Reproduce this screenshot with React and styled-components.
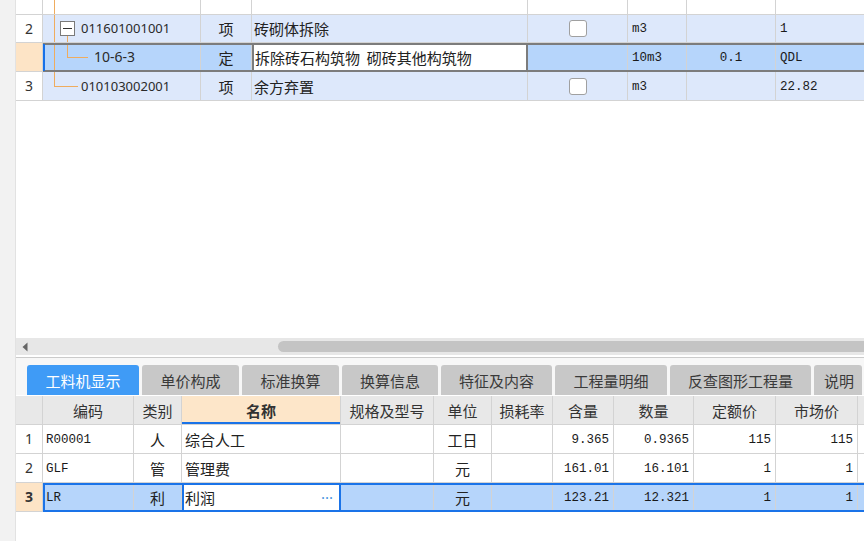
import React from 'react';
import styled, { createGlobalStyle, css } from 'styled-components';

const GlobalStyle = createGlobalStyle`
  html, body { margin: 0; padding: 0; background: #fff; }
  body { font-family: "Noto Sans CJK SC", "Noto Sans", sans-serif; color: #222; }
`;

const Page = styled.div`
  display: flex;
  width: 864px;
  height: 541px;
  overflow: hidden;
`;

const SideStrip = styled.div`
  width: 15px;
  flex-shrink: 0;
  background: #f2f2f2;
  border-right: 1px solid #e2e2e2;
`;

const Main = styled.div`
  flex: 1;
  min-width: 0;
  display: flex;
  flex-direction: column;
  overflow: hidden;
  background: #fff;
`;

const Grid = styled.div`
  display: flex;
  flex-direction: column;
  width: max-content;
`;

const Row = styled.div`
  display: flex;
  height: ${p => p.$h || 29}px;
  background: ${p => p.$bg || '#fff'};
`;

const Cell = styled.div`
  box-sizing: border-box;
  width: ${p => p.$w}px;
  flex-shrink: 0;
  height: 100%;
  display: flex;
  align-items: center;
  justify-content: ${p =>
    p.$align === 'right' ? 'flex-end' : p.$align === 'center' ? 'center' : 'flex-start'};
  padding: 0 ${p => (p.$pad != null ? p.$pad : 4)}px;
  border-right: 1px solid #d3d3d3;
  border-bottom: 1px solid #d3d3d3;
  background: ${p => p.$bg || 'transparent'};
  font-size: 15px;
  line-height: 1;
  white-space: pre;
  overflow: hidden;
  ${p => p.$mono && css`
    font-family: "Liberation Mono", "DejaVu Sans Mono", monospace;
    font-size: 12.5px;
    color: #1a1a1a;
    padding-top: 2px;
  `}
  ${p => p.$num && css`
    font-family: "Noto Sans", sans-serif;
    font-size: 14px;
    color: #333;
  `}
  ${p => p.$bold && css`font-weight: bold;`}
  ${p => p.$edit && css`
    background: #fff;
    outline: 2px solid ${p.$edit};
    outline-offset: -2px;
    justify-content: space-between;
  `}
`;

const HeadCell = styled(Cell)`
  background: ${p => (p.$active ? '#fde6c9' : '#e8e8e8')};
  color: #333;
  justify-content: center;
  font-weight: ${p => (p.$active ? 'bold' : 'normal')};
  ${p => p.$active && css`box-shadow: inset 0 -2px 0 #1a73e8;`}
`;

const TreeCell = styled(Cell)`
  padding: 0;
  align-items: stretch;
`;

const CodeText = styled.span`
  align-self: center;
  font-family: "Noto Sans", sans-serif;
  font-size: ${p => p.$size || 13}px;
  color: #2a2a2a;
`;

const Selection = styled.div`
  display: flex;
  height: 100%;
  position: relative;
  background: #b6d5fb;
  outline: 2px solid ${p => p.$color};
  outline-offset: -2px;
`;

const Marker = styled.span`
  position: absolute;
  left: 0;
  top: 1px;
  bottom: 1px;
  width: 2px;
  background: #1670e8;
  z-index: 1;
`;

const TreeSvg = styled.svg`
  flex-shrink: 0;
  display: block;
`;

const CheckBox = styled.span`
  width: 16px;
  height: 15px;
  border: 1px solid #a0a0a0;
  border-radius: 3px;
  background: #fff;
`;

const EditDots = styled.span`
  color: #4a94e0;
  font-family: "Noto Sans", sans-serif;
  font-size: 15px;
  padding-right: 4px;
`;

const Spacer = styled.div`
  flex: 1;
`;

const ScrollTrack = styled.div`
  height: 17px;
  flex-shrink: 0;
  display: flex;
  align-items: center;
  background: #e7e7e7;
`;

const ArrowBox = styled.div`
  width: 17px;
  height: 100%;
  display: flex;
  align-items: center;
  justify-content: center;
  flex-shrink: 0;
`;

const Thumb = styled.div`
  margin-left: 245px;
  width: 700px;
  height: 11px;
  border-radius: 6px;
  background: #c4c4c4;
  flex-shrink: 0;
`;

const TabBar = styled.div`
  display: flex;
  gap: 3px;
  box-sizing: border-box;
  height: 38px;
  margin-top: 2px;
  margin-bottom: 1px;
  padding: 7px 0 0 11px;
  border-top: 1px solid #cbcbcb;
  background: #f7f7f7;
  flex-shrink: 0;
`;

const Tab = styled.div`
  box-sizing: border-box;
  width: ${p => p.$w}px;
  flex-shrink: 0;
  height: 30px;
  display: flex;
  align-items: center;
  justify-content: ${p => (p.$start ? 'flex-start' : 'center')};
  padding-left: ${p => (p.$start ? 10 : 0)}px;
  border-radius: 3px 3px 0 0;
  font-size: 15px;
  background: ${p => (p.$active ? '#3f9bf6' : '#c8c8c8')};
  color: ${p => (p.$active ? '#fff' : '#3a3a3a')};
  white-space: nowrap;
  overflow: hidden;
`;

const BottomFill = styled.div`
  height: 29px;
  flex-shrink: 0;
`;

const ORANGE = '#efac5e';

const TreeLines = ({ kind, h }) => {
  const w = kind === 'child' ? 51 : 38;
  const mid = Math.floor(h / 2);
  return (
    <TreeSvg width={w} height={h} viewBox={`0 0 ${w} ${h}`} shapeRendering="crispEdges">
      {kind !== 'last' && <rect x={11} y={0} width={1.2} height={h} fill={ORANGE} />}
      {kind === 'last' && (
        <>
          <rect x={11} y={0} width={1.2} height={mid + 1} fill={ORANGE} />
          <rect x={11} y={mid} width={24} height={1} fill={ORANGE} />
        </>
      )}
      {kind === 'parent' && (
        <>
          <rect x={24} y={mid + 7} width={1} height={h - mid - 7} fill={ORANGE} />
          <rect x={17.5} y={mid - 6.5} width={14} height={14} fill="#fff" stroke="#7a7a7a" />
          <rect x={20} y={mid} width={9} height={1.4} fill="#333" />
        </>
      )}
      {kind === 'child' && (
        <>
          <rect x={24} y={0} width={1} height={mid + 1} fill={ORANGE} />
          <rect x={24} y={mid} width={21} height={1} fill={ORANGE} />
        </>
      )}
    </TreeSvg>
  );
};

const TOP = [27, 158, 51, 276, 100, 59, 89, 140];
const BOT = [27, 91, 48, 159, 93, 58, 61, 61, 80, 82, 82, 60];

const upperRows = [
  { h: 15, bg: '#fff', tree: 'top', cells: ['', '', false, '', '', ''] },
  { h: 28, bg: '#dde8fb', idx: '2', tree: 'parent', code: '011601001001', cells: ['项', '砖砌体拆除', true, 'm3', '', '1'] },
  { h: 29, bg: '#dde8fb', idx: '3', tree: 'last', code: '010103002001', cells: ['项', '余方弃置', true, 'm3', '', '22.82'] },
];

const UpperRow = ({ row }) => (
  <Row $h={row.h} $bg={row.bg}>
    <Cell $w={TOP[0]} $align="center" $bg="#fff" $num>{row.idx}</Cell>
    <TreeCell $w={TOP[1]}>
      <TreeLines kind={row.tree} h={row.h - 1} />
      {row.code && <CodeText>{row.code}</CodeText>}
    </TreeCell>
    <Cell $w={TOP[2]} $align="center">{row.cells[0]}</Cell>
    <Cell $w={TOP[3]} $pad={2}>{row.cells[1]}</Cell>
    <Cell $w={TOP[4]} $align="center">{row.cells[2] && <CheckBox />}</Cell>
    <Cell $w={TOP[5]} $mono>{row.cells[3]}</Cell>
    <Cell $w={TOP[6]} $align="center" $mono>{row.cells[4]}</Cell>
    <Cell $w={TOP[7]} $mono>{row.cells[5]}</Cell>
  </Row>
);

const FocusedUpperRow = () => (
  <Row $h={29} $bg="#fff">
    <Cell $w={TOP[0]} $bg="#fde4c6" />
    <Selection $color="#7c7c7c">
      <Marker />
      <TreeCell $w={TOP[1]}>
        <TreeLines kind="child" h={28} />
        <CodeText $size={14}>10-6-3</CodeText>
      </TreeCell>
      <Cell $w={TOP[2]} $align="center">定</Cell>
      <Cell $w={TOP[3]} $pad={3} $edit="#7c7c7c">拆除砖石构筑物  砌砖其他构筑物</Cell>
      <Cell $w={TOP[4]} />
      <Cell $w={TOP[5]} $mono>10m3</Cell>
      <Cell $w={TOP[6]} $align="center" $mono>0.1</Cell>
      <Cell $w={TOP[7]} $mono>QDL</Cell>
    </Selection>
  </Row>
);

const headers = ['', '编码', '类别', '名称', '规格及型号', '单位', '损耗率', '含量', '数量', '定额价', '市场价', ''];

const items = [
  { idx: '1', code: 'R00001', kind: '人', name: '综合人工', unit: '工日', amt: '9.365', qty: '0.9365', base: '115', market: '115' },
  { idx: '2', code: 'GLF', kind: '管', name: '管理费', unit: '元', amt: '161.01', qty: '16.101', base: '1', market: '1' },
];

const ItemCells = ({ it, edit }) => (
  <>
    <Cell $w={BOT[1]} $mono $pad={3}>{it.code}</Cell>
    <Cell $w={BOT[2]} $align="center">{it.kind}</Cell>
    {edit ? (
      <Cell $w={BOT[3]} $pad={3} $edit="#1a73e8">
        <span>{it.name}</span>
        <EditDots>···</EditDots>
      </Cell>
    ) : (
      <Cell $w={BOT[3]} $pad={3}>{it.name}</Cell>
    )}
    <Cell $w={BOT[4]} />
    <Cell $w={BOT[5]} $align="center">{it.unit}</Cell>
    <Cell $w={BOT[6]} />
    <Cell $w={BOT[7]} $align="right" $mono>{it.amt}</Cell>
    <Cell $w={BOT[8]} $align="right" $mono>{it.qty}</Cell>
    <Cell $w={BOT[9]} $align="right" $mono>{it.base}</Cell>
    <Cell $w={BOT[10]} $align="right" $mono>{it.market}</Cell>
    <Cell $w={BOT[11]} />
  </>
);

const selectedItem = { idx: '3', code: 'LR', kind: '利', name: '利润', unit: '元', amt: '123.21', qty: '12.321', base: '1', market: '1' };

export default function App() {
  return (
    <>
      <GlobalStyle />
      <Page>
        <SideStrip />
        <Main>
          <Grid>
            <UpperRow row={upperRows[0]} />
            <UpperRow row={upperRows[1]} />
            <FocusedUpperRow />
            <UpperRow row={upperRows[2]} />
          </Grid>

          <Spacer />

          <ScrollTrack>
            <ArrowBox>
              <svg width="6" height="10" viewBox="0 0 6 10">
                <path d="M5.5 0.5 L0.5 5 L5.5 9.5 Z" fill="#666" />
              </svg>
            </ArrowBox>
            <Thumb />
          </ScrollTrack>

          <TabBar>
            <Tab $w={112} $active>工料机显示</Tab>
            <Tab $w={97}>单价构成</Tab>
            <Tab $w={97}>标准换算</Tab>
            <Tab $w={96}>换算信息</Tab>
            <Tab $w={111}>特征及内容</Tab>
            <Tab $w={112}>工程量明细</Tab>
            <Tab $w={141}>反查图形工程量</Tab>
            <Tab $w={48} $start>说明</Tab>
          </TabBar>

          <Grid>
            <Row $h={29}>
              {headers.map((h, i) => (
                <HeadCell key={i} $w={BOT[i]} $active={i === 3}>{h}</HeadCell>
              ))}
            </Row>
            {items.map(it => (
              <Row key={it.idx} $h={29}>
                <Cell $w={BOT[0]} $align="center" $num>{it.idx}</Cell>
                <ItemCells it={it} />
              </Row>
            ))}
            <Row $h={29}>
              <Cell $w={BOT[0]} $align="center" $num $bold $bg="#fde4c6">{selectedItem.idx}</Cell>
              <Selection $color="#1a73e8">
                <ItemCells it={selectedItem} edit />
              </Selection>
            </Row>
          </Grid>

          <BottomFill />
        </Main>
      </Page>
    </>
  );
}
